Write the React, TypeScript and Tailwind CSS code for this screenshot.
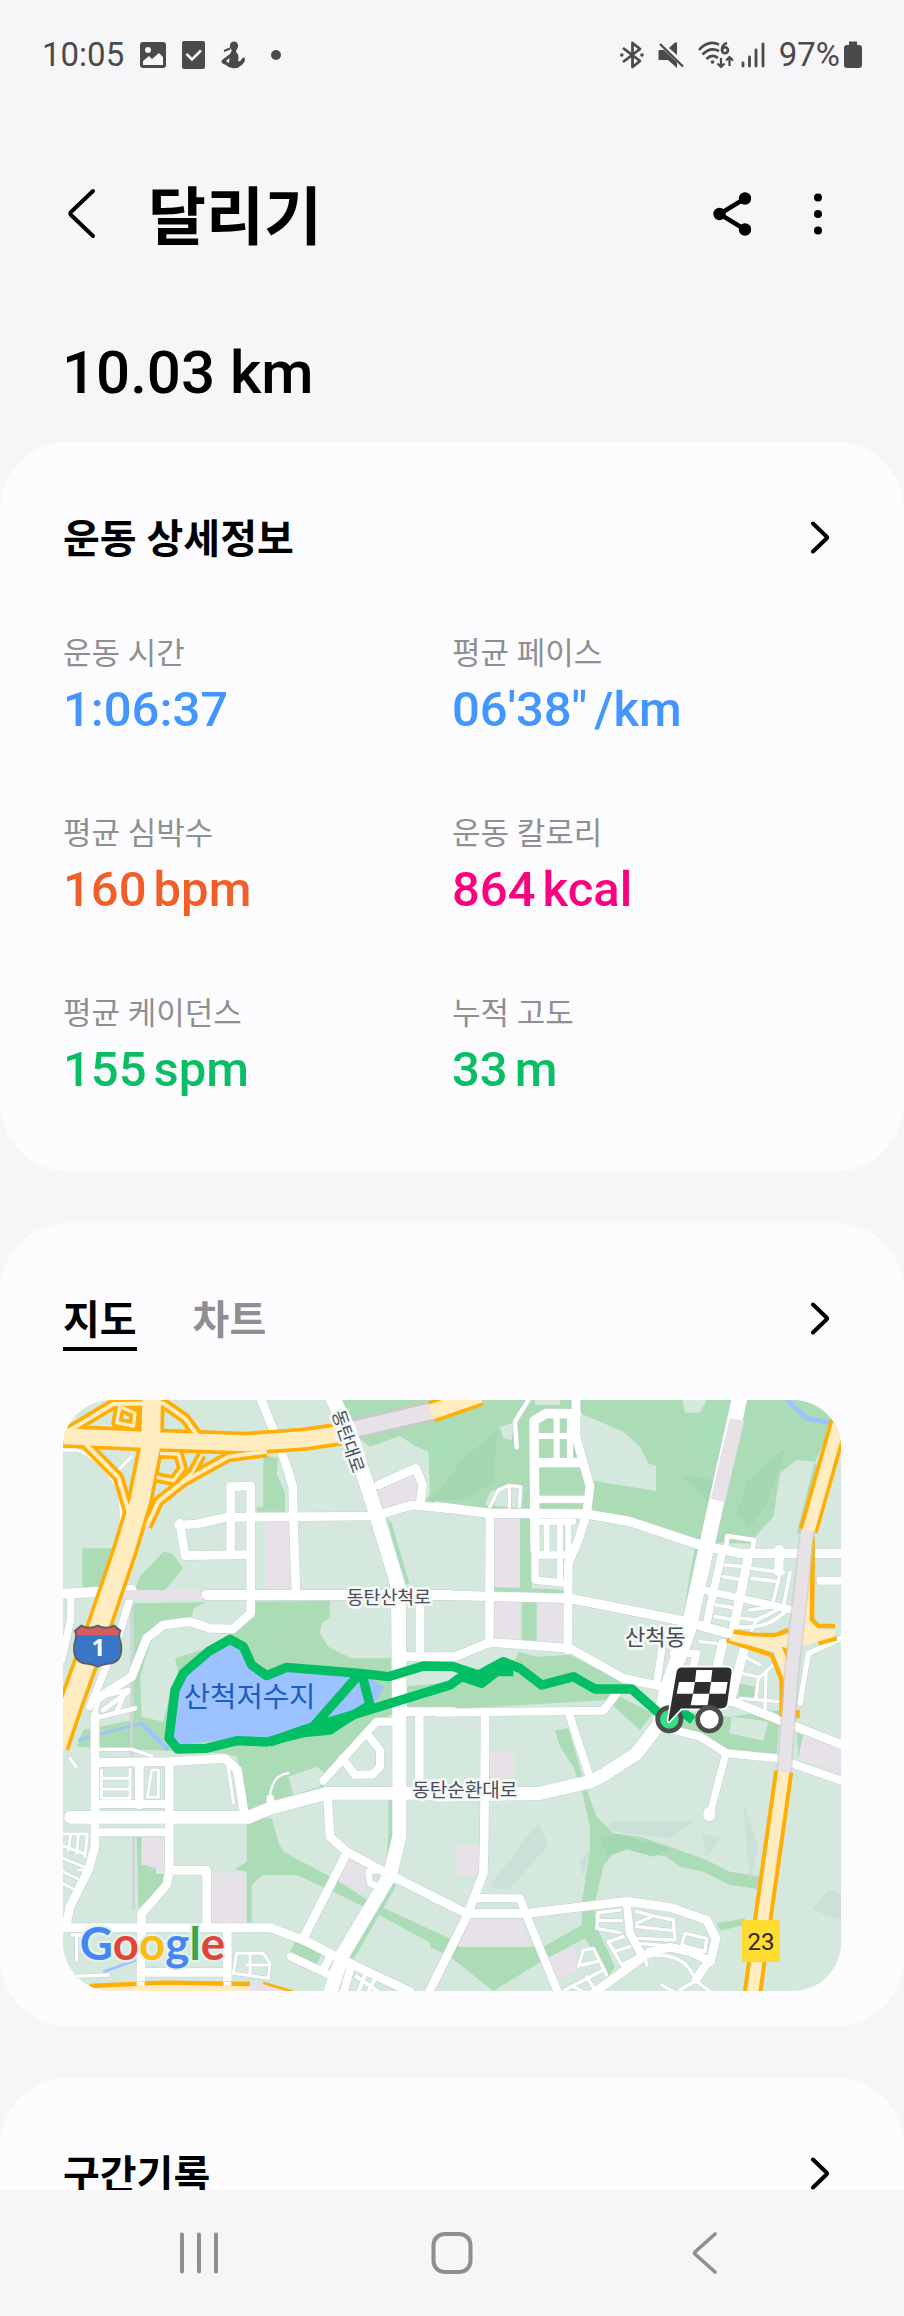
import { useState } from "react";

type Metric = {
  label: string;
  value: string;
  unit?: string;
  color: string;
};

const metrics: Metric[] = [
  { label: "운동 시간", value: "1:06:37", color: "text-[#4296fd]" },
  { label: "평균 페이스", value: "06'38\"", unit: "/km", color: "text-[#4296fd]" },
  { label: "평균 심박수", value: "160", unit: "bpm", color: "text-[#f05f28]" },
  { label: "운동 칼로리", value: "864", unit: "kcal", color: "text-[#f9017f]" },
  { label: "평균 케이던스", value: "155", unit: "spm", color: "text-[#0bbe65]" },
  { label: "누적 고도", value: "33", unit: "m", color: "text-[#0bbe65]" }
];

const PARK = "#acdcb6";
const LAND = "#d5e8de";
const BLOCK = "#e7e2e7";
const SHADE = "#cbe0d6";
const PARK_SHADE = "#a2d7b2";
const WATER = "#9cc2ff";

type Tile = {
  x: number;
  y: number;
  areas: [string, string][];
  roads: [number, string][];
};

// The map is stored as four tiles, each with its own origin.
const tiles: Tile[] = [
  {
    x: -39,
    y: -30,
    areas: [
      [PARK, "640,195 685,205 680,250 705,310 705,365 620,365 620,350 640,350"],
      [PARK, "97,475 190,475 205,595 97,595"],
      [PARK, "270,560 340,485 365,490 400,535 345,600 255,600"],
      [PARK, "1010,380 1025,400 1078,580 1060,590"],
      [BLOCK, "645,395 720,395 724,600 645,600"],
      [BLOCK, "985,295 1090,250 1105,325 1005,352"],
      [PARK, "250,640 840,632 838,685 815,700 810,730 835,770 905,805 1030,805 1030,970 940,1030 820,1190 590,1260 560,1100 520,1090 80,1070 100,1020 250,990"],
      [LAND, "430,655 480,632 600,632 595,675 550,705 480,705 425,685"],
      [LAND, "340,720 420,705 480,728 545,732 470,775 375,805 385,850 355,930 340,995 275,980 270,860 300,760"],
      ["#a8dfba", "610,755 655,670 725,660"],
      [WATER, "540,750 560,742 590,780 610,830 650,860 710,835 930,850 1002,890 985,925 960,945 850,1000 660,1040 560,1045 380,1065 360,1040 390,850 470,785"]
    ],
    roads: [
      [10, "M39 180 H80 Q150 205 200 290 Q225 360 205 470 M195 250 L245 200"],
      [26, "M630 20 L670 120 L712 235 L728 290 L732 440 L738 610"],
      [44, "M845 20 L900 130 L975 360 L1045 590 L1048 945"],
      [26, "M385 405 L440 402 L530 382 L975 378 L1085 345 L1200 356"],
      [26, "M542 485 L542 290 L602 288 L602 670 L548 717 L480 715 L420 695 L340 705 L290 745 L245 860 L135 930"],
      [26, "M390 400 L405 497 L600 494"],
      [30, "M30 612 L245 600 M470 615 L1200 615"],
      [26, "M985 285 L1098 235 L1118 285 L1110 340"],
      [26, "M1110 615 L1110 800 M1055 800 L1210 800"],
      [22, "M62 630 L62 690 L35 810 M245 610 L205 740 L120 950"]
    ]
  },
  {
    x: 1131,
    y: -30,
    areas: [
      [PARK, "-290,30 1189,30 1180,100 1125,215 1070,210 1020,250 1000,380 945,440 945,460 780,460 600,400 440,365 140,365 0,345 -45,335 -30,310 -35,185 -80,165 -120,138 -210,170 -260,130"],
      [PARK, "1125,215 1100,310 1070,430 1085,430 1130,230"],
      [PARK_SHADE, "65,210 172,120 160,280 65,330 -40,330 0,300"],
      [PARK_SHADE, "1040,170 975,350 925,420 890,370 925,270"],
      [PARK_SHADE, "725,255 820,270 805,335"],
      ["#a8dfba", "0,80 65,100 40,200 0,230 -30,180"],
      ["#a8dfba", "800,60 870,50 825,230 770,140"],
      [LAND, "420,70 550,125 600,170 625,220 648,228 648,303 460,272 420,150"],
      [LAND, "180,110 222,98 215,150 190,145"],
      [LAND, "285,30 360,30 360,45 285,45"],
      [LAND, "728,30 800,30 780,68 735,68"],
      [LAND, "135,345 150,305 200,285 250,290 245,355"],
      [PARK, "240,365 290,365 275,480 275,600 240,600"],
      [PARK, "160,590 390,600 730,680 760,470 775,475 740,690 160,608"],
      [LAND, "385,615 440,372 570,395 765,470 728,676"],
      [BLOCK, "165,385 240,385 240,592 160,592"],
      [BLOCK, "160,635 240,635 240,752 160,742"],
      [PARK, "245,625 290,625 290,752 245,752"],
      [BLOCK, "295,640 370,640 370,765 290,755"],
      [PARK, "-115,890 0,880 100,850 235,785 290,800 390,795 550,875 540,920 640,970 600,1020 500,930 0,960 -115,950"],
      [LAND, "60,815 150,785 235,785 230,805 150,850 90,840"],
      [PARK, "900,880 945,890 940,935 895,925"]
    ],
    roads: [
      [13, "M265 30 L225 95 L230 172"],
      [26, "M408 20 L408 140 L450 290 L440 370 L415 450 L385 520 L383 780"],
      [28, "M410 72 L320 70 L282 92 L285 480 M285 218 H425"],
      [22, "M285 328 H440 M285 505 V570 L380 580 M285 495 H395"],
      [18, "M350 75 V220 M390 80 V220 M290 138 H410 M320 400 V480 M360 400 V580 M385 400 V560 M290 395 H400"],
      [28, "M-10 350 L150 370 L440 372 L570 395 L780 465 L900 490 L1210 490"],
      [26, "M150 370 L148 760"],
      [28, "M-10 615 L390 625 L740 695 L900 740"],
      [26, "M-10 800 L45 800 L150 757 L390 775 L550 865 L690 895 L880 935 L1210 1066"],
      [10, "M150 350 L175 300 L205 287 L242 290 L238 350 M208 290 V350"],
      [46, "M900 20 L815 400 L745 720 L680 900 L660 1000"],
      [14, "M858 475 L862 438 L942 450 L938 480"],
      [24, "M848 480 L802 690"],
      [28, "M925 500 L878 730 M1018 478 L1016 545"],
      [22, "M790 600 L1050 658 M1100 470 L1048 800"],
      [11, "M855 525 L915 530 M850 560 L910 570 M935 535 L1030 548 M935 565 L1008 574 M1022 545 L998 640 M1050 548 L1030 650"],
      [11, "M830 645 L895 655 M825 680 L885 690 M905 685 L950 690 L1030 650 M950 690 L935 720 M895 710 Q980 720 1035 665 M930 660 L1000 650"],
      [24, "M1142 572 H1210"],
      [28, "M912 780 L870 935 M848 760 L832 830"],
      [22, "M665 780 L650 880 M700 790 L770 790 L760 830"],
      [10, "M780 755 L830 760 M915 800 L960 825 M905 850 L960 862 L1005 820 M955 865 L948 925 M978 850 L975 960 M900 925 L1020 935"],
      [16, "M1203 745 L1105 790 L1080 940"]
    ]
  },
  {
    x: -39,
    y: 870,
    areas: [
      [PARK, "590,385 665,385 685,455 700,485 860,570 960,635 1210,750 1210,800 1180,780 960,660 840,600 740,555 640,555 605,585 605,705 590,705 590,545 555,538 590,515"],
      [PARK, "260,440 275,440 275,520 345,550 335,590 265,655"],
      [BLOCK, "275,445 342,445 342,552 318,552 318,525 275,525"],
      [BLOCK, "485,548 588,548 588,700 485,700"],
      [BLOCK, "900,495 960,520 940,605 860,570"],
      [LAND, "715,260 800,230 825,250 810,290 730,315"],
      [PARK, "735,755 815,790 800,825 720,785"],
      [PARK, "1015,330 1028,330 1028,470 1008,530 1015,430"],
      [PARK, "1030,580 1040,585 910,810 900,800"]
    ],
    roads: [
      [42, "M1048 -10 L1048 440 L1020 555 L880 790 L840 910"],
      [38, "M62 382 L595 382 L660 355 L830 310 L1210 310"],
      [26, "M135 75 L135 470 L115 540 L60 650 L50 700"],
      [14, "M130 80 L150 20 L235 0 M135 85 L255 55 M160 60 L235 5 M200 65 L225 10"],
      [26, "M135 218 L360 215 L525 205 L562 240 L582 365"],
      [26, "M268 220 V345 M358 215 V540 L350 585 L275 670 L272 910"],
      [24, "M135 342 H355 M135 427 H355"],
      [26, "M360 541 H470 V705"],
      [26, "M30 713 L660 713 L760 750 L900 820 L1080 905"],
      [26, "M532 713 V905 M275 847 H530"],
      [26, "M890 490 L760 745 M832 310 L840 440 L890 485 L1020 555 L1210 650"],
      [24, "M820 272 L880 205 L980 95 L1040 95 M878 205 L915 255 L968 253 L990 230 V180 L950 130"],
      [26, "M1055 65 H1210 M1108 65 V262"],
      [24, "M722 800 L850 860 M840 800 L820 840 M1210 760 L1135 910 M905 820 L880 910"],
      [12, "M920 860 L985 905 M945 855 L925 905 M975 865 L955 905"],
      [18, "M990 540 L955 545 L960 580 L1000 595"],
      [10, "M533 220 L550 338 M150 178 H245 L305 198 M60 205 L78 230"],
      [9, "M155 240 V325 H240 V238 M160 265 H240 M160 298 H240 M305 240 L292 322 H325 V240 Z"],
      [9, "M39 432 H112 L105 500 M62 435 L55 480 M85 435 L80 490 M39 468 L105 492 M39 505 L100 530 M39 545 L90 570 M39 580 L75 600 M85 540 H110"],
      [9, "M560 790 L550 850 L655 865 L660 820 L640 790 Z M600 790 V855 M590 825 H660"],
      [10, "M65 735 H120 M80 740 V810 M39 860 L175 855"],
      [6, "M660 320 Q665 255 715 250"],
      [22, "M661 325 V335"]
    ]
  },
  {
    x: 1131,
    y: 870,
    areas: [
      [PARK, "345,120 385,115 410,200 440,300 470,380 520,430 600,440 690,470 800,510 870,545 965,560 960,598 870,585 790,545 720,530 680,500 560,478 515,495 490,530 465,640 465,700 525,830 505,860 435,745 295,820 160,903 30,800 -30,770 -30,735 60,770 310,770 425,705 425,640 450,480 450,410 425,300 400,230 360,170"],
      [PARK_SHADE, "480,440 530,432 690,475 640,500 560,478 500,500"],
      [SHADE, "295,395 325,465 205,600 150,590"],
      [SHADE, "520,395 760,395 690,445 600,435 525,425 500,410"],
      [SHADE, "910,340 955,470 930,575"],
      [SHADE, "785,430 845,445 800,500"],
      [SHADE, "1165,598 1203,612 1203,690 1115,660"],
      [SHADE, "418,515 450,480 430,560"],
      [BLOCK, "90,690 245,690 270,770 55,770"],
      [BLOCK, "150,185 222,185 222,262 150,262"],
      [BLOCK, "50,468 118,468 118,555 50,555"],
      [BLOCK, "320,805 400,770 415,835 350,880"],
      [PARK, "690,60 870,80 1020,60 1010,195 870,185 790,130 690,110"],
      [LAND, "875,80 985,95 970,152 868,130"],
      [PARK, "1070,130 1090,135 1075,205"],
      [BLOCK, "1088,140 1210,180 1210,258 1075,205"],
      [PARK, "830,700 915,685 915,705 840,722"]
    ],
    roads: [
      [24, "M-10 68 L490 62 L530 10"],
      [26, "M135 75 L133 440 L130 550 L80 680 L-20 880"],
      [40, "M-10 315 L300 310 L450 275 L490 255 L590 190 L655 105"],
      [24, "M390 80 L445 250"],
      [24, "M680 115 L780 140 L860 190 L1010 205 L1210 274"],
      [22, "M855 200 L812 365"],
      [36, "M808 368 V376"],
      [26, "M-20 622 L80 670 L260 670 L560 634 L690 652 L800 690 L828 745 L815 800 L768 868"],
      [24, "M110 624 L240 625 L265 690 L355 910"],
      [24, "M560 640 L570 730 L605 795"],
      [26, "M460 910 L630 785 L690 772 L750 785 L812 815"],
      [10, "M540 660 L475 668 L470 715 L540 728 M478 692 H545 M590 665 L650 680 L700 690 L705 750 L590 745 M590 710 L700 722 M590 700 L635 680"],
      [10, "M735 730 L800 745 L795 785 L725 765 Z M590 760 L720 770 M550 740 L505 755 L545 825 L590 800 M520 785 L570 770"],
      [10, "M375 900 L490 840 M415 830 L430 780 L460 775 L500 855 M425 825 L470 815 M400 890 L430 905 M440 860 L465 900"],
      [10, "M615 800 L620 825 M615 800 Q720 780 760 855 M665 885 L700 905 M770 870 L720 900 M765 870 L810 905"]
    ]
  }
];

const expressways: [number, string][] = [
  [24, "M95 150 L205 262 L240 380"],
  [24, "M60 120 L190 42 L340 40 L405 85 L445 140"],
  [22, "M210 50 L255 70 L250 108 L200 98 Z"],
  [24, "M650 185 L535 200 L400 275 L325 335 L290 410"],
  [22, "M330 190 L385 192 L398 235 L370 272 L320 262"],
  [20, "M455 195 L425 250 L395 275"],
  [60, "M30 138 L300 150 L590 160 L760 148 L885 130"],
  [68, "M305 20 L302 170 L270 330 L225 480 L150 700 L60 950 L20 1070"]
];

function Areas({ items }: { items: [string, string][] }) {
  return (
    <>
      {items.map(([fill, points]) => (
        <polygon key={points} fill={fill} points={points} />
      ))}
    </>
  );
}

function RouteMap() {
  return (
    <svg
      className="block h-auto w-full rounded-[48px] [font-family:Roboto,'Noto_Sans_CJK_KR',sans-serif]"
      viewBox="0 0 2334 1773"
      role="img"
      aria-label="지도"
    >
      <rect width="2334" height="1773" fill={LAND} />
      {tiles.map((tile) => (
        <g key={`${tile.x},${tile.y}`} transform={`translate(${tile.x} ${tile.y})`}>
          <Areas items={tile.areas} />
        </g>
      ))}

      {/* streams */}
      <g fill="none" stroke={WATER}>
        <path strokeWidth="14" d="M2171 0 L2231 55 L2320 72" />
        <path strokeWidth="8" d="M46 1020 L236 970" />
        <path strokeWidth="12" d="M236 970 L316 1050" />
        <path strokeWidth="8" d="M120 1716 L220 1680" />
      </g>
      <path d="M206 610 V1070 M212 1310 V1530" stroke="#cdd6d4" strokeWidth="8" />

      <g fill="none" strokeLinejoin="round" strokeLinecap="round">
        <g stroke="#c6cfd4">
          {tiles.map((tile) => (
            <g key={`${tile.x},${tile.y}`} transform={`translate(${tile.x} ${tile.y})`}>
              {tile.roads.map(([width, d]) => (
                <path key={d} d={d} strokeWidth={width + 3} />
              ))}
            </g>
          ))}
        </g>
        <g stroke="#ffffff">
          {tiles.map((tile) => (
            <g key={`${tile.x},${tile.y}`} transform={`translate(${tile.x} ${tile.y})`}>
              {tile.roads.map(([width, d]) => (
                <path key={d} d={d} strokeWidth={width} />
              ))}
            </g>
          ))}
        </g>
      </g>

      {/* tunnels on the white roads */}
      <g fill="none" stroke={BLOCK}>
        <path strokeWidth="30" d="M150 585 H417" />
        <path strokeWidth="44" d="M2022 58 L1964 302" />
      </g>

      {/* expressways on the west side */}
      <g transform="translate(-39 -30)" fill="none" strokeLinejoin="round">
        <g stroke="#ffae05">
          {expressways.map(([width, d]) => (
            <path key={d} d={d} strokeWidth={width + 10} />
          ))}
        </g>
        <g stroke="#ffedc1">
          {expressways.map(([width, d]) => (
            <path key={d} d={d} strokeWidth={width - 12} />
          ))}
        </g>
        <path d="M880 125 L1150 62" stroke="#c9c9cb" strokeWidth="62" />
        <path d="M880 125 L1150 62" stroke={BLOCK} strokeWidth="46" />
        <path d="M1145 66 L1290 15" stroke="#ffae05" strokeWidth="66" />
        <path d="M1143 66 L1290 15" stroke="#ffedc1" strokeWidth="46" />
        <path d="M880 85 L900 130 L925 205" stroke="#ffffff" strokeWidth="44" />
      </g>

      {/* expressway on the east side with its junction */}
      <g transform="translate(1131 -30)" fill="none" strokeLinejoin="round">
        <path d="M1198 95 L1105 422" stroke="#ffae05" strokeWidth="58" />
        <path d="M1198 95 L1105 425" stroke="#ffedc1" strokeWidth="36" />
        <path d="M1118 440 L1116 690 L1135 708 L1185 708 M1190 745 L1135 760 M860 750 L995 795 L1025 870 L1025 980 M880 725 L945 735 L1010 735 L1045 720 M1072 985 V960 M1030 775 L1040 800" stroke="#ffae05" strokeWidth="14" />
        <path d="M875 735 L1000 742 L1060 730 L1090 650 L1095 440 L1108 440 L1108 690 L1135 718 L1190 722 L1180 742 L1080 770 L1060 960 L1032 960 L1032 860 L1005 785 L870 752 Z" fill="#ffedc1" />
        <path d="M1025 770 L1042 775 L1040 808 Z" fill="#ffae05" />
        <path d="M1102 422 L1055 850 L1032 1150" stroke="#c9c9cb" strokeWidth="48" opacity="0.6" />
        <path d="M1102 422 L1055 850 L1032 1150" stroke={BLOCK} strokeWidth="36" />
        <path d="M1031 1145 L935 1825" stroke="#ffae05" strokeWidth="58" />
        <path d="M1031 1145 L935 1825" stroke="#ffedc1" strokeWidth="34" />
      </g>

      {/* southern expressway */}
      <path d="M40 1773 L90 1755 L300 1752 L561 1755 V1773 Z" fill="#ffedc1" />
      <path d="M80 1758 L300 1748 L561 1752" fill="none" stroke="#ffae05" strokeWidth="13" />
      <path d="M561 1745 L620 1752 L680 1773 H561 Z" fill={BLOCK} />
      <path d="M600 1748 L690 1775" stroke="#ffae05" strokeWidth="8" />
      <path d="M233 1745 V1757 M493 1745 V1757" stroke="#ffffff" strokeWidth="24" />

      {/* recorded route */}
      <g fill="none" stroke="#02bf63" strokeWidth="28" strokeLinejoin="round">
        <path d="M1800 950 L1706 867 H1596 L1531 830 L1436 855 L1371 805 L1321 785 L1246 825 L1171 800 L1081 798 L976 830 L891 820 L671 802 L611 827 L566 795 L541 740 L501 718 L436 755 L361 820 L336 870 L318 1015 L344 1047 L431 1045 L521 1022 L611 1026 L721 998 L800 990 L846 960 L921 915 L896 820" />
        <path d="M891 820 L751 980" />
        <path d="M620 1026 L721 990 L851 950 L1161 855 L1196 830 L1256 850 L1301 815 L1351 815" />
        <path d="M1850 930 L1890 960" />
      </g>

      {/* place names */}
      <g fill="#4a4c55" stroke="#f4f8f6" strokeWidth="16" strokeLinejoin="round" paintOrder="stroke">
        <text x="851" y="611" fontSize="55">동탄산척로</text>
        <text x="1686" y="735" fontSize="66">산척동</text>
        <text x="1048" y="1192" fontSize="57">동탄순환대로</text>
        <text transform="translate(806 38) rotate(71)" x="0" y="0" fontSize="53">동탄대로</text>
      </g>
      <text x="362" y="922" fontSize="86" fill="#1b5dc1">산척저수지</text>

      {/* route shields */}
      <path d="M36 692 L55 677 Q80 690 104 677 Q128 690 153 677 L172 692 Q165 708 173 728 Q182 780 145 790 Q120 792 104 800 Q88 792 63 790 Q26 780 35 728 Q43 708 36 692 Z" fill="#3a76c8" />
      <path d="M36 692 L55 677 Q80 690 104 677 Q128 690 153 677 L172 692 L168 706 H40 Z" fill="#d85c5c" />
      <path d="M36 692 L55 677 Q80 690 104 677 Q128 690 153 677 L172 692 Q165 708 173 728 Q182 780 145 790 Q120 792 104 800 Q88 792 63 790 Q26 780 35 728 Q43 708 36 692 Z" fill="none" stroke="#5a6068" strokeWidth="6" />
      <text x="106" y="767" fontSize="72" fontWeight="700" textAnchor="middle" fill="#ffffff" className="[font-family:'Noto_Sans',sans-serif]">1</text>
      <rect x="2037" y="1560" width="114" height="126" fill="#ffdc32" />
      <text x="2094" y="1651" fontSize="72" textAnchor="middle" fill="#2e2a1c">23</text>

      {/* start and finish markers */}
      <g transform="translate(1731 300)">
        <circle cx="88" cy="658" r="35" fill="#35dd88" stroke="#4d4d4d" strokeWidth="14" />
        <path d="M126 500 H260 Q279 500 277 518 L264 612 Q261 628 244 628 H124 L88 667 Q82 668 83 658 L107 517 Q110 500 126 500 Z" fill="#2e2e2e" stroke="#ffffff" strokeWidth="5" />
        <path d="M169 510 H217 L213 546 H165 Z M117 546 H165 L159 581 H110 Z M213 546 H263 L257 581 H208 Z M159 581 H208 L203 616 H152 Z" fill="#ffffff" />
        <circle cx="208" cy="658" r="35" fill="#ffffff" stroke="#4d4d4d" strokeWidth="14" />
      </g>

      <text
        x="50"
        y="1680"
        fontSize="137"
        fontWeight="700"
        stroke="#e6f1eb"
        strokeWidth="14"
        strokeLinejoin="round"
        paintOrder="stroke"
        className="[font-family:Lato,sans-serif]"
      >
        <tspan fill="#4486f4">G</tspan>
        <tspan fill="#e24439">o</tspan>
        <tspan fill="#f8bb12">o</tspan>
        <tspan fill="#4486f4">g</tspan>
        <tspan fill="#36a653">l</tspan>
        <tspan fill="#e24439">e</tspan>
      </text>
    </svg>
  );
}

function StatusBar() {
  return (
    <div className="flex h-[110px] shrink-0 items-center justify-between pr-[42px] pl-[42px] text-[33px] text-[#4a4a4a]">
      <div className="flex items-center">
        <span>10:05</span>
        <svg className="ml-4 h-7 w-[26px]" viewBox="0 0 26 28" aria-hidden="true">
          <rect y="1" width="26" height="26" rx="3" fill="currentColor" />
          <circle cx="8" cy="9" r="3" fill="#f6f6f8" />
          <path d="M3 20 L9 15 L12 18 L19 12 L23 16 V24 H3 Z" fill="#f6f6f8" />
        </svg>
        <svg className="ml-4 h-7 w-[23px]" viewBox="0 0 23 28" aria-hidden="true">
          <rect width="23" height="28" rx="2" fill="currentColor" />
          <path d="M4.5 13 L10 18.5 L19 9.5" fill="none" stroke="#f6f6f8" strokeWidth="2.6" />
        </svg>
        <svg className="ml-4 h-7 w-6" viewBox="0 0 24 28" fill="currentColor" aria-hidden="true">
          <ellipse cx="13" cy="5" rx="4.2" ry="4.6" />
          <path d="M3 10 L9 7.5 M2.5 20 L9 14.5" stroke="currentColor" strokeWidth="2" />
          <path d="M11 9 H15 L15.500 12 Q18.500 13 17 20 Q19 21 20 19 L21.500 17 Q23 16 24 17.500 Q24 22 20 24.500 Q17 28 11 27 Q7 26.500 5 24 Q-1 22 1 19 L9 13 Z" />
          <path d="M5 20 L8.5 17 L8 22 Z" fill="#f6f6f8" />
        </svg>
        <span className="ml-[26px] h-[10px] w-[10px] rounded-full bg-[#4a4a4a]" />
      </div>
      <div className="flex items-center">
        <svg className="h-7 w-6" viewBox="0 0 24 28" fill="none" stroke="currentColor" strokeWidth="2.8" strokeLinejoin="round" aria-hidden="true">
          <path d="M3 7 L20 20 L12.5 26 V2 L20 8 L3 21" />
          <circle cx="1.8" cy="14" r="1.8" fill="currentColor" stroke="none" />
          <circle cx="22" cy="14" r="1.8" fill="currentColor" stroke="none" />
        </svg>
        <svg className="ml-[14px] h-7 w-[26px]" viewBox="0 0 26 28" fill="currentColor" aria-hidden="true">
          <path d="M1.5 9 H6 L19 21.5 V27 L10 19 H1.5 Q0.5 19 0.5 18 V10 Q0.5 9 1.5 9 Z" />
          <path d="M11 7 L17 1.5 H19 V14 Z" />
          <path d="M2 3 L25 25.5" stroke="currentColor" strokeWidth="2.4" />
        </svg>
        <svg className="ml-[14px] h-7 w-9" viewBox="0 0 36 28" fill="none" stroke="currentColor" strokeWidth="2.6" aria-hidden="true">
          <path d="M1 9 Q10 -1.5 21 3.5" />
          <path d="M4.5 13.5 Q12 5.5 21 10" />
          <path d="M8.5 18 Q14 12.5 20 17" />
          <circle cx="14.5" cy="21" r="1.8" fill="currentColor" stroke="none" />
          <path d="M29 2 Q24 3.5 24 9" />
          <circle cx="27" cy="9.2" r="3" />
          <path d="M23 17 V26 M19.5 22.5 L23 26 L26.5 22.5 M31.5 25 V16 M28 19.5 L31.5 16 L35 19.5" strokeWidth="2.2" />
        </svg>
        <svg className="ml-[7px] h-7 w-6" viewBox="0 0 24 28" stroke="currentColor" strokeWidth="2.8" strokeLinecap="round" aria-hidden="true">
          <path d="M2 22 V25 M8.5 16 V25 M15 9 V25 M22 3 V25" />
        </svg>
        <span className="ml-[14px]">97%</span>
        <svg className="ml-1 h-7 w-[18px]" viewBox="0 0 18 28" fill="currentColor" aria-hidden="true">
          <path d="M5 0.5 H13 V4 H15 Q18 4 18 7 V24 Q18 27 15 27 H3 Q0 27 0 24 V7 Q0 4 3 4 H5 Z" />
        </svg>
      </div>
    </div>
  );
}

function MoreButton({ label }: { label: string }) {
  return (
    <button type="button" aria-label={label} className="flex h-16 w-[42px] items-center justify-center">
      <svg className="h-9 w-5" viewBox="0 0 20 36" fill="none" stroke="#000" strokeWidth="4" strokeLinecap="round" strokeLinejoin="round" aria-hidden="true">
        <path d="M3 3.5 L16.5 16.500 Q17.5 17.5 16.5 18.5 L3 31.5" />
      </svg>
    </button>
  );
}

export default function App() {
  const [tab, setTab] = useState<"map" | "chart">("map");

  return (
    <div className="flex h-screen flex-col bg-[#f6f6f8] text-black [font-family:Roboto,'Noto_Sans_CJK_KR',sans-serif]">
      <StatusBar />

      <header className="flex h-[208px] shrink-0 items-center px-[62px]">
        <button type="button" aria-label="뒤로" className="flex h-16 w-10 items-center justify-center">
          <svg className="h-[52px] w-7" viewBox="0 0 28 52" fill="none" stroke="#000" strokeWidth="4" strokeLinecap="round" strokeLinejoin="round" aria-hidden="true">
            <path d="M25 3 L3 24 Q1.5 25.5 3 27 L25 48" />
          </svg>
        </button>
        <h1 className="ml-[46px] flex-1 pt-2 text-[63px] leading-[80px] font-semibold">달리기</h1>
        <button type="button" aria-label="공유" className="flex h-16 w-12 items-center justify-center">
          <svg className="h-11 w-[38px]" viewBox="0 0 38 44" aria-hidden="true">
            <path d="M32 6.5 L6.5 22 L32 37.5" fill="none" stroke="#000" strokeWidth="4.4" />
            <circle cx="32" cy="6.500" r="6.2" />
            <circle cx="6.5" cy="22" r="6.2" />
            <circle cx="32" cy="37.5" r="6.2" />
          </svg>
        </button>
        <button type="button" aria-label="더보기" className="ml-[38px] flex h-16 w-12 items-center justify-center">
          <svg className="h-11 w-2" viewBox="0 0 8 44" aria-hidden="true">
            <circle cx="4" cy="5.5" r="4" />
            <circle cx="4" cy="22" r="4" />
            <circle cx="4" cy="38.5" r="4" />
          </svg>
        </button>
      </header>

      <p className="h-[124px] shrink-0 px-[62px] text-[60px] leading-[110px] font-medium">10.03 km</p>

      <main className="flex min-h-0 flex-1 flex-col gap-[52px] overflow-hidden">
        <section className="shrink-0 rounded-[68px] bg-[#fcfcfe] px-[63px] pt-16 pb-[73px]">
          <div className="flex h-16 items-center justify-between">
            <h2 className="pt-1 text-[40px] leading-[60px] font-semibold">운동 상세정보</h2>
            <MoreButton label="운동 상세정보 더보기" />
          </div>
          <dl className="mt-16 grid grid-cols-2 gap-y-[76px]">
            {metrics.map((metric) => (
              <div key={metric.label}>
                <dt className="text-[31px] leading-[40px] text-[#8f8f91]">{metric.label}</dt>
                <dd className={`mt-2 flex gap-[7px] text-[49px] leading-[56px] font-medium ${metric.color}`}>
                  <span>{metric.value}</span>
                  {metric.unit ? <span>{metric.unit}</span> : null}
                </dd>
              </div>
            ))}
          </dl>
        </section>

        <section className="shrink-0 rounded-[68px] bg-[#fcfcfe] px-[63px] pt-16 pb-[35px]">
          <div className="flex h-16 items-center justify-between">
            <div role="tablist" className="flex gap-14 text-[40px] leading-[52px] font-semibold">
              <button
                type="button"
                role="tab"
                aria-selected={tab === "map"}
                onClick={() => setTab("map")}
                className={tab === "map" ? "border-b-4 border-black pt-2" : "border-b-4 border-transparent pt-2 text-[#8f8f91]"}
              >
                지도
              </button>
              <button
                type="button"
                role="tab"
                aria-selected={tab === "chart"}
                onClick={() => setTab("chart")}
                className={tab === "chart" ? "border-b-4 border-black pt-2" : "border-b-4 border-transparent pt-2 text-[#8f8f91]"}
              >
                차트
              </button>
            </div>
            <MoreButton label="지도 더보기" />
          </div>
          <div className="mt-[49px]">
            <RouteMap />
          </div>
        </section>

        <section className="shrink-0 rounded-t-[68px] bg-[#fcfcfe] px-[63px] pt-16 pb-16">
          <div className="flex h-16 items-center justify-between">
            <h2 className="pt-1 text-[40px] leading-[60px] font-semibold">구간기록</h2>
            <MoreButton label="구간기록 더보기" />
          </div>
        </section>
      </main>

      <nav className="grid h-[126px] shrink-0 grid-cols-3 bg-[#f6f6f8] px-[72px] text-[#8f8f91]">
        <button type="button" aria-label="최근 앱" className="flex items-center justify-center">
          <svg className="h-[42px] w-10" viewBox="0 0 40 42" stroke="currentColor" strokeWidth="4" strokeLinecap="round" aria-hidden="true">
            <path d="M3 2.5 V39.5 M20 2.5 V39.5 M37 2.5 V39.5" />
          </svg>
        </button>
        <button type="button" aria-label="홈" className="flex items-center justify-center">
          <svg className="h-[42px] w-[42px]" viewBox="0 0 42 42" fill="none" stroke="currentColor" strokeWidth="4" aria-hidden="true">
            <rect x="2.5" y="2" width="37" height="38" rx="11" />
          </svg>
        </button>
        <button type="button" aria-label="이전" className="flex items-center justify-center">
          <svg className="h-[42px] w-[26px]" viewBox="0 0 26 42" fill="none" stroke="currentColor" strokeWidth="3.6" strokeLinecap="round" strokeLinejoin="round" aria-hidden="true">
            <path d="M23 2 L3 20 Q2 21 3 22 L23 40" />
          </svg>
        </button>
      </nav>
    </div>
  );
}
